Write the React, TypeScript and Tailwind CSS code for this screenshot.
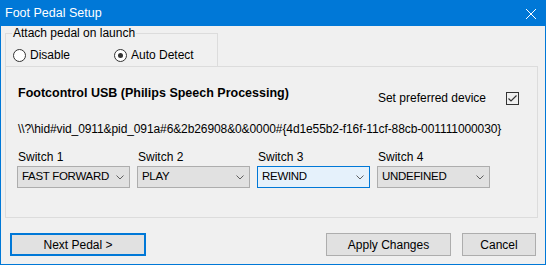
import React from "react";

const font = { fontFamily: '"Liberation Sans", Arial, sans-serif' };

function Chevron() {
  return (
    <svg width="8" height="5" viewBox="0 0 8 5" className="shrink-0">
      <polyline points="0.5,0.5 4,4 7.5,0.5" fill="none" stroke="#606060" strokeWidth="1" />
    </svg>
  );
}

function Combo({ value, active }: { value: string; active?: boolean }) {
  return (
    <div
      className={
        "flex items-center justify-between w-[113px] h-[22px] border pl-[4px] pr-[5px] text-[11.5px] tracking-[-0.3px] text-black whitespace-nowrap " +
        (active ? "bg-[#e5f1fb] border-[#0078d7]" : "bg-[#e1e1e1] border-[#adadad]")
      }
    >
      <span>{value}</span>
      <Chevron />
    </div>
  );
}

function Radio({ label, checked }: { label: string; checked?: boolean }) {
  return (
    <div className="flex items-center gap-[4px] text-[12px] whitespace-nowrap">
      <span className="w-[13px] h-[13px] rounded-full border border-[#333] bg-white flex items-center justify-center">
        {checked && <span className="w-[5px] h-[5px] rounded-full bg-[#333]" />}
      </span>
      <span>{label}</span>
    </div>
  );
}

const switches = [
  { label: "Switch 1", value: "FAST FORWARD" },
  { label: "Switch 2", value: "PLAY" },
  { label: "Switch 3", value: "REWIND", active: true },
  { label: "Switch 4", value: "UNDEFINED" },
];

export default function App() {
  return (
    <div
      style={font}
      className="w-[546px] h-[265px] border border-[#0078d7] bg-[#f0f0f0] flex flex-col text-black whitespace-nowrap"
    >
      <div className="h-[25px] bg-[#0078d7] flex items-center justify-between pl-[4px] pr-[9px] text-white text-[12.5px]">
        <span>Foot Pedal Setup</span>
        <svg width="10" height="10" viewBox="0 0 10 10">
          <path d="M0 0 L10 10 M10 0 L0 10" stroke="white" strokeWidth="1" />
        </svg>
      </div>

      <div className="flex-1 flex flex-col px-[4px]">
        <div className="relative mt-[7px] w-[213px] h-[33px] border-x border-t border-[#dcdcdc]">
          <span className="absolute -top-[8px] left-[6px] px-[1px] bg-[#f0f0f0] text-[12px] leading-[15px]">
            Attach pedal on launch
          </span>
          <div className="flex pl-[7px] pt-[12px]">
            <div className="w-[101px]">
              <Radio label="Disable" />
            </div>
            <Radio label="Auto Detect" checked />
          </div>
        </div>

        <div className="w-[533px] h-[152px] border border-[#dcdcdc] pl-[12px] pr-[18px] pt-[18px]">
          <div className="flex justify-between items-start">
            <span className="text-[12.5px] font-bold leading-[16px]">Footcontrol USB (Philips Speech Processing)</span>
            <div className="flex items-center h-[16px] mt-[5px] gap-[20px] text-[12px]">
              <span>Set preferred device</span>
              <span className="w-[13px] h-[13px] border border-[#333] bg-[#f0f0f0] flex items-center justify-center">
                <svg width="9" height="7" viewBox="0 0 9 7">
                  <polyline points="0.5,3.5 3,6 8.5,0.5" fill="none" stroke="#333" strokeWidth="1.2" />
                </svg>
              </span>
            </div>
          </div>
          <div className="mt-[15px] text-[12px] leading-[16px] tracking-[-0.1px]">
            \\?\hid#vid_0911&amp;pid_091a#6&amp;2b26908&amp;0&amp;0000#{"{"}4d1e55b2-f16f-11cf-88cb-001111000030{"}"}
          </div>
          <div className="flex gap-[7px] mt-[12px] -ml-px">
            {switches.map((s) => (
              <div key={s.label} className="flex flex-col">
                <span className="text-[12px] pl-px leading-[16px] mb-[1px]">{s.label}</span>
                <Combo value={s.value} active={s.active} />
              </div>
            ))}
          </div>
        </div>

        <div className="flex items-center mt-[15px] pl-[5px] pr-[5px]">
          <button className="w-[136px] h-[23px] border-2 border-[#0078d7] bg-[#e1e1e1] text-[12px]">
            Next Pedal &gt;
          </button>
          <div className="flex-1" />
          <button className="w-[125px] h-[23px] border border-[#adadad] bg-[#e1e1e1] text-[12px] mr-[11px]">
            Apply Changes
          </button>
          <button className="w-[74px] h-[23px] border border-[#adadad] bg-[#e1e1e1] text-[12px]">
            Cancel
          </button>
        </div>
      </div>
    </div>
  );
}
